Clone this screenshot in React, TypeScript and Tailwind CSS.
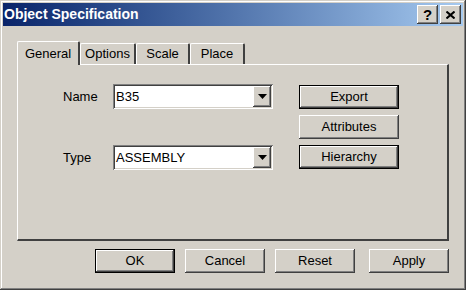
import React from "react";

const raised =
  "bg-[#d4d0c8] shadow-[inset_-1px_-1px_#404040,inset_1px_1px_#ffffff,inset_-2px_-2px_#808080,inset_2px_2px_#d4d0c8]";
const raisedDefault =
  "bg-[#d4d0c8] border border-black shadow-[inset_-1px_-1px_#404040,inset_1px_1px_#ffffff,inset_-2px_-2px_#808080,inset_2px_2px_#d4d0c8]";
const sunken =
  "bg-white shadow-[inset_1px_1px_#808080,inset_-1px_-1px_#ffffff,inset_2px_2px_#404040,inset_-2px_-2px_#d4d0c8]";

function CaptionButton({ children }: { children: React.ReactNode }) {
  return (
    <div
      className={`${raised} w-[21px] h-[19px] flex items-center justify-center text-black font-bold text-[15px] leading-none`}
    >
      {children}
    </div>
  );
}

function Combo({ value }: { value: string }) {
  return (
    <div className={`${sunken} w-[160px] h-[25px] flex items-stretch p-[2px]`}>
      <div className="flex-1 flex items-center pl-[1px] text-[13px]">{value}</div>
      <div className={`${raised} w-[18px] flex items-center justify-center`}>
        <svg width="9" height="5" viewBox="0 0 9 5">
          <path d="M0 0h9L4.5 5z" fill="#000" />
        </svg>
      </div>
    </div>
  );
}

function Tab({ label, active, w }: { label: string; active?: boolean; w: string }) {
  if (active) {
    return (
      <div
        className={`relative z-10 ${w} h-[24px] flex items-center justify-center bg-[#d4d0c8] border-l border-t border-white border-r-2 border-r-[#404040] rounded-t-[2px] -mb-[1px]`}
      >
        {label}
      </div>
    );
  }
  return (
    <div
      className={`${w} h-[21px] mt-[2px] flex items-center justify-center bg-[#d4d0c8] border-l border-t border-white border-r-2 border-r-[#404040] rounded-t-[2px]`}
    >
      {label}
    </div>
  );
}

function Btn({ label, isDefault, w = "w-[80px]" }: { label: string; isDefault?: boolean; w?: string }) {
  return (
    <div className={`${isDefault ? raisedDefault : raised} ${w} h-[24px] flex items-center justify-center`}>
      {label}
    </div>
  );
}

export default function App() {
  return (
    <div
      className="w-[466px] h-[290px] bg-[#d4d0c8] p-[3px] flex flex-col text-[13px] text-black font-['Liberation_Sans',Arial,sans-serif] shadow-[inset_-1px_-1px_#404040,inset_1px_1px_#d4d0c8,inset_-2px_-2px_#808080,inset_2px_2px_#ffffff]"
    >
      <div className="h-[23px] flex items-center bg-gradient-to-r from-[#0a246a] to-[#a6caf0] pl-[1px] pr-[2px] gap-[2px]">
        <span className="flex-1 text-white font-bold text-[14px]">Object Specification</span>
        <CaptionButton>?</CaptionButton>
        <CaptionButton>
          <svg width="9" height="8" viewBox="0 0 9 8">
            <path d="M0.5 0.5l8 7M8.5 0.5l-8 7" stroke="#000" strokeWidth="2" />
          </svg>
        </CaptionButton>
      </div>

      <div className="pl-[14px] pr-[14px] pt-[15px]">
        <div className="flex items-end">
          <Tab label="General" active w="w-[63px]" />
          <Tab label="Options" w="w-[56px]" />
          <Tab label="Scale" w="w-[54px]" />
          <Tab label="Place" w="w-[55px]" />
        </div>
        <div className="h-[177px] border-l border-t border-white border-r-2 border-b-2 border-r-[#404040] border-b-[#404040] flex pt-[19px]">
          <div className="flex flex-col pl-[45px] gap-[36px]">
            <div className="flex items-center">
              <span className="w-[50px]">Name</span>
              <Combo value="B35" />
            </div>
            <div className="flex items-center">
              <span className="w-[50px]">Type</span>
              <Combo value="ASSEMBLY" />
            </div>
          </div>
          <div className="flex flex-col pl-[26px] gap-[6px] pt-[1px]">
            <Btn label="Export" isDefault w="w-[100px]" />
            <Btn label="Attributes" w="w-[100px]" />
            <Btn label="Hierarchy" isDefault w="w-[100px]" />
          </div>
        </div>
      </div>

      <div className="flex pt-[8px] pl-[92px] gap-[10px]">
        <Btn label="OK" isDefault />
        <Btn label="Cancel" />
        <Btn label="Reset" />
        <div className="pl-[4px]">
          <Btn label="Apply" />
        </div>
      </div>
    </div>
  );
}
